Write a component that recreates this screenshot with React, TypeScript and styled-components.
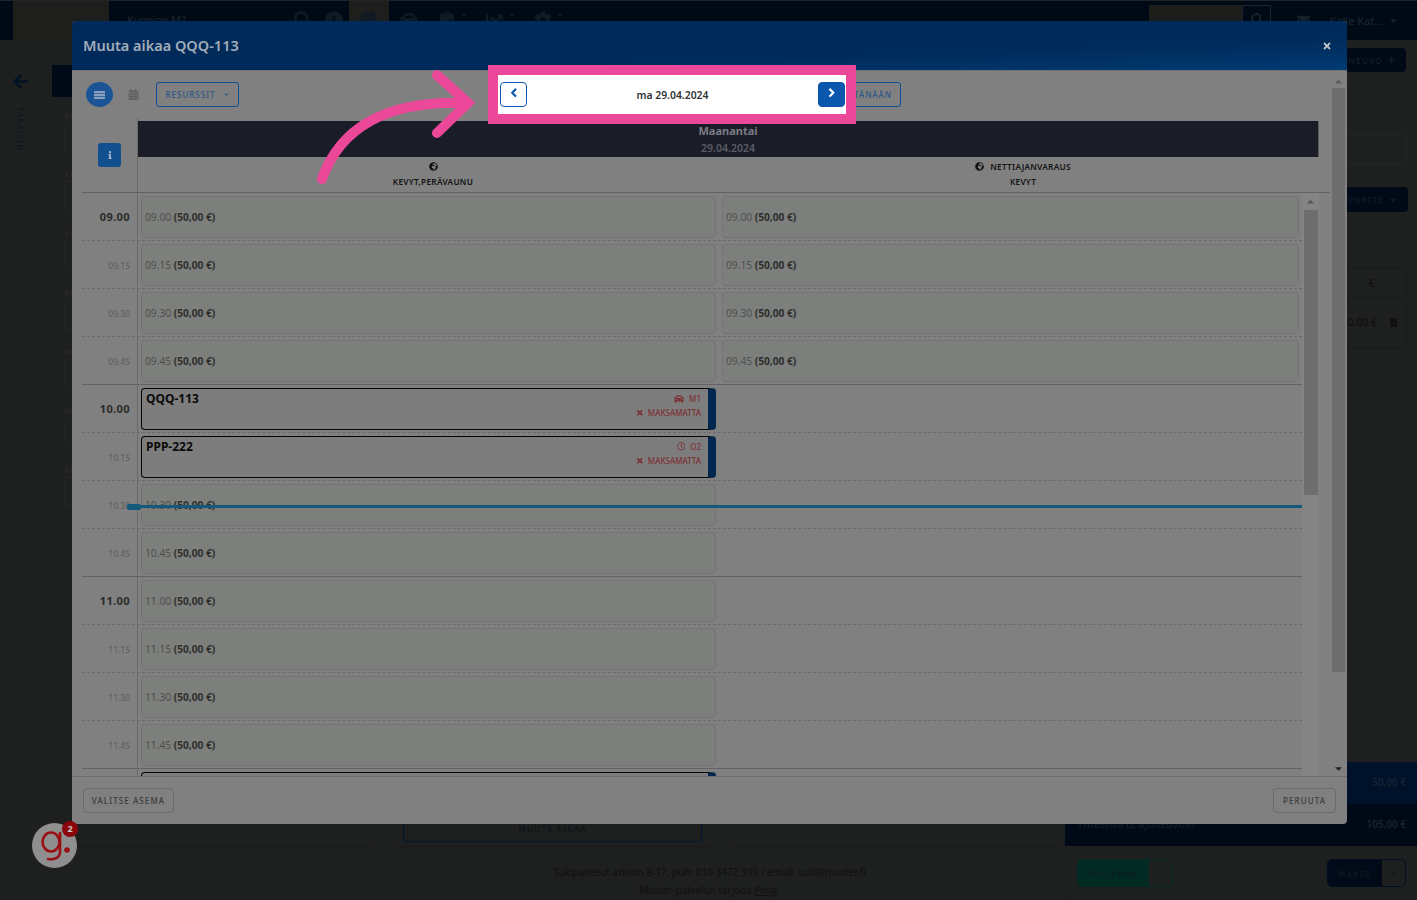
import React from "react";
import styled, { createGlobalStyle } from "styled-components";
import {
  FaArrowLeft,
  FaCalendarAlt,
  FaCar,
  FaCaretDown,
  FaCaretUp,
  FaChartLine,
  FaChevronLeft,
  FaChevronRight,
  FaClipboardCheck,
  FaCog,
  FaEnvelope,
  FaGlobeAfrica,
  FaInfo,
  FaInfoCircle,
  FaPlus,
  FaRegClock,
  FaSearch,
  FaTimes,
  FaTrashAlt,
} from "react-icons/fa";

const GlobalStyle = createGlobalStyle`
  html, body {
    margin: 0;
    padding: 0;
    background: #1e1f1f;
    font-family: "Noto Sans", "Liberation Sans", sans-serif;
  }
  * { box-sizing: border-box; }
`;

const Page = styled.div`
  position: relative;
  width: 1417px;
  height: 900px;
  overflow: hidden;
  background: #1e1f1f;
`;

/* dimmed page behind the modal */
const TopBar = styled.header`
  display: flex;
  align-items: flex-start;
  height: 40px;
  padding-left: 13px;
  background: #000a17;
  border-top: 1px solid #20242a;
  color: #14202c;
`;

const LogoBox = styled.div`
  width: 96px;
  height: 39px;
  background: #1e1e1d;
  margin-right: 18px;
`;

const StationName = styled.div`
  width: 160px;
  padding-top: 12px;
  font-size: 10.5px;
  color: #1f262d;
`;

const NavIcon = styled.div<{ $active?: boolean; $width: number }>`
  display: flex;
  align-items: flex-start;
  justify-content: center;
  gap: 4px;
  width: ${(p) => p.$width}px;
  height: 39px;
  padding-top: 10px;
  font-size: 18px;
  background: ${(p) => (p.$active ? "#1e1e1d" : "transparent")};
  color: #0f1a26;
`;

const TopRight = styled.div`
  display: flex;
  align-items: flex-start;
  margin-left: auto;
  padding-right: 19px;
  padding-top: 4px;
`;

const SearchBox = styled.div`
  display: flex;
  justify-content: flex-end;
  width: 122px;
  height: 28px;
  background: #1c1c1b;
  margin-right: 26px;
`;

const SearchButton = styled.div`
  width: 29px;
  height: 28px;
  padding: 6px 0 0 8px;
  font-size: 13px;
  background: #000a17;
  border: 1px solid #1c2630;
`;

const UserName = styled.div`
  display: flex;
  align-items: center;
  gap: 6px;
  margin-left: 19px;
  padding-top: 8px;
  font-size: 11px;
  color: #1f262d;
`;

const MailIcon = styled.div`
  padding-top: 8px;
  font-size: 13px;
`;

const Content = styled.main`
  display: grid;
  grid-template-columns: 52px 1013px 352px;
  height: 860px;
`;

const Rail = styled.aside`
  display: flex;
  flex-direction: column;
  align-items: center;
  padding-top: 33px;
  padding-right: 12px;
  color: #041226;
  font-size: 17px;
`;

const RailLabel = styled.div`
  margin-top: 17px;
  writing-mode: vertical-rl;
  font-size: 8px;
  letter-spacing: 1.2px;
  color: #0c1622;
`;

const MainColumn = styled.section`
  display: flex;
  flex-direction: column;
`;

const Tab = styled.div`
  width: 100px;
  height: 32px;
  margin-top: 25px;
  background: #000a17;
`;

const Form = styled.div`
  display: flex;
  flex-direction: column;
  gap: 15px;
  height: 740px;
  padding: 13px 0 0 12px;
`;

const FieldLabel = styled.div`
  height: 12px;
  font-size: 8px;
  font-weight: 600;
  letter-spacing: 0.5px;
  color: #2a2a2a;
`;

const FieldInput = styled.div`
  width: 200px;
  height: 30px;
  margin-bottom: 2px;
  border: 1px solid #242525;
  border-radius: 3px;
`;

const Cards = styled.div`
  display: flex;
  gap: 18px;
  height: 0;
`;

const BackCard = styled.div<{ $width: number }>`
  flex: none;
  width: ${(p) => p.$width}px;
  height: 60px;
  margin-top: -50px;
  padding: 37px 10px 0;
  border-bottom: 1px solid #191a1a;
  border-radius: 0 0 4px 4px;
`;

const OldButton = styled.div`
  height: 18px;
  border: 1px solid #00182f;
  border-top: 0;
  border-radius: 0 0 4px 4px;
  text-align: center;
  font-size: 8px;
  line-height: 10px;
  letter-spacing: 1.4px;
  color: #0c1218;
`;

const FooterText = styled.div`
  margin-top: 26px;
  padding-left: 302px;
  font-size: 10px;
  line-height: 18px;
  text-align: center;
  color: #0f1010;
  u { color: #0f1010; }
`;

const SidePanel = styled.aside`
  display: flex;
  flex-direction: column;
  align-items: flex-end;
  border-left: 1px solid #1b1c1c;
`;

const AddButton = styled.div`
  display: flex;
  align-items: center;
  justify-content: flex-end;
  gap: 4px;
  width: 200px;
  height: 24px;
  margin: 8px 11px 0 0;
  padding-right: 10px;
  background: #000a17;
  border-radius: 4px;
  font-size: 8.5px;
  font-weight: 600;
  letter-spacing: 1px;
  color: #0e1a26;
`;

const GhostField = styled.div`
  width: 200px;
  height: 30px;
  margin: 62px 10px 0 0;
  border: 1px solid #232424;
  border-radius: 3px;
`;

const ActionButton = styled(AddButton)`
  height: 25px;
  margin-top: 23px;
  margin-right: 9px;
`;

const PriceTable = styled.div`
  width: 200px;
  height: 81px;
  margin: 55px 10px 0 0;
  border: 1px solid #191a1a;
  border-radius: 3px;
  color: #0d0d0d;
  font-size: 10.5px;
`;

const PriceHead = styled.div`
  height: 30px;
  padding: 8px 31px 0 0;
  text-align: right;
  border-bottom: 1px solid #181919;
`;

const PriceRow = styled.div`
  display: flex;
  justify-content: flex-end;
  align-items: center;
  gap: 12px;
  padding: 17px 8px 0 0;
`;

const Totals = styled.div`
  display: flex;
  flex-direction: column;
  width: 352px;
  margin-top: auto;
`;

const TotalRow = styled.div<{ $dark?: boolean }>`
  display: flex;
  justify-content: flex-end;
  align-items: center;
  height: 42px;
  padding: 0 11px 2px 12px;
  background: ${(p) => (p.$dark ? "#000a17" : "#00112a")};
  font-size: 10px;
  font-weight: 600;
  color: #162330;
`;

const TotalLabel = styled.span`
  margin-right: auto;
  font-size: 10.5px;
  font-weight: 500;
  color: #0f1c2a;
`;

const PayRow = styled.div`
  display: flex;
  justify-content: space-between;
  width: 352px;
  height: 54px;
  padding: 13px 11px 0 12px;
`;

const SplitButton = styled.div<{ $width: number; $green?: boolean }>`
  display: flex;
  width: ${(p) => p.$width}px;
  height: 28px;
  border: 1px solid ${(p) => (p.$green ? "#002a22" : "#000f22")};
  border-radius: 5px;
  overflow: hidden;
  font-size: 8px;
  font-weight: 600;
  letter-spacing: 1.2px;
  color: #0e1a26;
  background: ${(p) => (p.$green ? "#002a22" : "#000a18")};
`;

const SplitLabel = styled.div`
  flex: 1;
  display: flex;
  align-items: center;
  justify-content: center;
`;

const SplitCaret = styled.div`
  display: flex;
  align-items: center;
  justify-content: center;
  width: 23px;
  font-size: 7px;
  background: #1e1f1f;
`;

/* modal */
const Modal = styled.div`
  position: absolute;
  top: 21px;
  left: 72px;
  display: flex;
  flex-direction: column;
  width: 1275px;
  height: 803px;
  border-radius: 4px;
  overflow: hidden;
  background: #808080;
`;

const ModalHeader = styled.div`
  display: flex;
  flex: none;
  align-items: center;
  justify-content: space-between;
  height: 49px;
  padding: 0 15px 2px 11px;
  background: linear-gradient(178deg, #002a59 65%, #003b74 100%);
`;

const ModalTitle = styled.div`
  font-size: 14.5px;
  font-weight: 600;
  color: #a3adba;
`;

const CloseIcon = styled.div`
  display: flex;
  padding-top: 2px;
  font-size: 10px;
  color: #c6c9cc;
`;

const ModalBody = styled.div`
  display: flex;
  flex: 1;
  min-height: 0;
  border-top: 1px solid #737373;
`;

const Calendar = styled.div`
  display: flex;
  flex-direction: column;
  width: 1258px;
  padding-left: 10px;
`;

const Toolbar = styled.div`
  display: flex;
  flex: none;
  align-items: center;
  height: 47px;
  padding: 0 0 0 4px;
`;

const RoundButton = styled.div`
  display: flex;
  align-items: center;
  justify-content: center;
  width: 27px;
  height: 25px;
  border-radius: 50%;
  background: #1a5497;
  color: #8aa0ba;
`;

const CalendarIcon = styled.div`
  display: flex;
  margin-left: 15px;
  font-size: 11px;
  color: #5f5f5f;
`;

const OutlineButton = styled.div`
  display: flex;
  align-items: center;
  justify-content: center;
  gap: 7px;
  height: 25px;
  border: 1px solid #0f4f96;
  border-radius: 3px;
  font-size: 8px;
  font-weight: 500;
  letter-spacing: 1px;
  color: #2c5687;
`;

const ResourceButton = styled(OutlineButton)`
  width: 83px;
  margin-left: 17px;
`;

const TodayButton = styled(OutlineButton)`
  width: 56px;
  margin-left: 606px;
`;

const CaretIcon = styled.span`
  display: flex;
  font-size: 7px;
`;

const HeadRow = styled.div`
  display: flex;
  flex: none;
  height: 75px;
  border-bottom: 1px solid #616161;
`;

const CornerCell = styled.div`
  display: flex;
  flex: none;
  align-items: center;
  justify-content: center;
  width: 56px;
  border-right: 1px solid #6a6a6a;
`;

const InfoButton = styled.div`
  display: flex;
  align-items: center;
  justify-content: center;
  width: 23px;
  height: 24px;
  border-radius: 3px;
  background: #124f8e;
  font-size: 8px;
  color: #a9b8c9;
`;

const HeadMain = styled.div`
  display: flex;
  flex-direction: column;
  width: 1181px;
  padding-top: 3px;
`;

const DayBand = styled.div`
  display: flex;
  flex-direction: column;
  align-items: center;
  height: 36px;
  background: #1a1c28;
  border-right: 1px solid #5c5c5c;
`;

const DayName = styled.div`
  font-size: 11px;
  line-height: 19px;
  font-weight: 700;
  color: #7a7c84;
`;

const DayDate = styled.div`
  font-size: 10.5px;
  line-height: 16px;
  font-weight: 600;
  color: #5b5d66;
`;

const ResourceRow = styled.div`
  display: grid;
  flex: 1;
  grid-template-columns: 590px 590px;
`;

const ResourceCell = styled.div`
  display: flex;
  flex-direction: column;
  align-items: center;
  padding-top: 2px;
  font-size: 8.3px;
  font-weight: 600;
  line-height: 15px;
  letter-spacing: 0.25px;
  color: #131313;
`;

const ResourceName = styled.div`
  display: flex;
  align-items: center;
  gap: 6px;
  height: 15px;
  svg { font-size: 9px; color: #111; }
`;

const GridArea = styled.div`
  position: relative;
  display: flex;
  flex: 1;
  min-height: 0;
  overflow: hidden;
`;

const Rows = styled.div`
  display: flex;
  flex-direction: column;
  width: 1220px;
`;

const Row = styled.div<{ $solid: boolean }>`
  display: flex;
  flex: none;
  height: 48px;
  border-bottom: 1px ${(p) => (p.$solid ? "solid #636363" : "dashed #6a6a6a")};
`;

const TimeCell = styled.div<{ $major: boolean }>`
  flex: none;
  width: 56px;
  padding: ${(p) => (p.$major ? "16px" : "17px")} 7px 0 0;
  text-align: right;
  border-right: 1px solid #6a6a6a;
  font-size: ${(p) => (p.$major ? "11px" : "8.5px")};
  font-weight: ${(p) => (p.$major ? 700 : 400)};
  line-height: 16px;
  letter-spacing: ${(p) => (p.$major ? "0.4px" : "0")};
  color: ${(p) => (p.$major ? "#2a2a2a" : "#5c5c5c")};
`;

const Slots = styled.div`
  display: grid;
  grid-template-columns: 575px 577px;
  column-gap: 6px;
  padding: 3px 0 0 3px;
`;

const Slot = styled.div`
  height: 42px;
  padding: 12px 0 0 3px;
  background: #7c7f7b;
  border: 1px solid #727472;
  border-radius: 4px;
  font-size: 10.2px;
  line-height: 16px;
  color: #4f4f4f;
  b { font-weight: 700; color: #2e2e2e; }
`;

const Booking = styled.div`
  display: flex;
  justify-content: space-between;
  height: 42px;
  background: #7d7d7d;
  border: 1.5px solid #060606;
  border-right: 8px solid #00284f;
  border-radius: 4px;
  padding: 2px 7px 0 4px;
`;

const Plate = styled.div`
  font-size: 12px;
  font-weight: 700;
  line-height: 16px;
  color: #0a0a0a;
`;

const BookingInfo = styled.div`
  display: flex;
  flex-direction: column;
  align-items: flex-end;
  gap: 3px;
  padding-top: 2px;
  color: #7c3236;
  font-size: 8px;
  font-weight: 500;
  line-height: 11px;
`;

const InfoLine = styled.div`
  display: flex;
  align-items: center;
  gap: 4px;
  svg { font-size: 7.5px; stroke: currentColor; stroke-width: 40; }
`;

const CarLine = styled(InfoLine)`
  gap: 5px;
  svg { font-size: 10px; stroke-width: 0; }
`;

const ClockIcon = styled(FaRegClock)`
  && { font-size: 8.5px; }
`;

const NowLine = styled.div`
  position: absolute;
  top: 312px;
  left: 55px;
  width: 1165px;
  height: 3px;
  background: #14587c;
  &::before {
    content: "";
    position: absolute;
    top: -1px;
    left: -10px;
    width: 14px;
    height: 6px;
    border-radius: 2px;
    background: #14587c;
  }
`;

const ScrollTrack = styled.div<{ $width: number }>`
  display: flex;
  flex: none;
  flex-direction: column;
  align-items: center;
  width: ${(p) => p.$width}px;
  color: #5a5a5a;
  font-size: 11px;
`;

const InnerTrack = styled(ScrollTrack)`
  padding-top: 3px;
  background: #848484;
`;

const InnerThumb = styled.div`
  width: 14px;
  height: 285px;
  margin-top: 3px;
  background: #6e6e6e;
`;

const OuterTrack = styled(ScrollTrack)`
  margin-left: 2px;
  padding-top: 5px;
`;

const OuterThumb = styled.div`
  width: 13px;
  height: 584px;
  margin-top: 1px;
  background: #6e6e6e;
`;

const OuterArrowDown = styled.div`
  display: flex;
  margin-top: auto;
  margin-bottom: 2px;
  color: #232323;
`;

const ModalFooter = styled.div`
  display: flex;
  flex: none;
  align-items: center;
  justify-content: space-between;
  height: 48px;
  padding: 0 11px 1px;
  border-top: 1px solid #6f6f6f;
`;

const FooterButton = styled.div<{ $width: number }>`
  display: flex;
  align-items: center;
  justify-content: center;
  width: ${(p) => p.$width}px;
  height: 25px;
  border: 1px solid #6a6a6a;
  border-radius: 4px;
  font-size: 8px;
  font-weight: 500;
  letter-spacing: 1.1px;
  color: #3a3a3a;
`;

/* highlight drawn over the screenshot */
const Highlight = styled.div`
  position: absolute;
  top: 65px;
  left: 488px;
  display: flex;
  align-items: center;
  justify-content: space-between;
  width: 368px;
  height: 59px;
  padding: 0 1px 1px 2px;
  background: #fff;
  border: 10px solid #ec4899;
`;

const NavButton = styled.div<{ $filled?: boolean }>`
  display: flex;
  align-items: center;
  justify-content: center;
  width: 27px;
  height: 25px;
  padding-bottom: 3px;
  font-size: 9.5px;
  border: 1px solid #0b57ad;
  border-radius: 4px;
  background: ${(p) => (p.$filled ? "#0b57ad" : "#fff")};
  color: ${(p) => (p.$filled ? "#fff" : "#0b57ad")};
  svg { stroke: currentColor; stroke-width: 50; }
`;

const DateLabel = styled.div`
  padding-top: 1px;
  font-size: 10.4px;
  font-weight: 600;
  color: #333;
`;

const ArrowSvg = styled.svg`
  position: absolute;
  top: 60px;
  left: 310px;
`;

const Guide = styled.div`
  position: absolute;
  top: 823px;
  left: 32px;
  width: 45px;
  height: 45px;
  border-radius: 50%;
  background: #8f8f8f;
`;

const GuideBadge = styled.div`
  position: absolute;
  top: -2px;
  right: -1px;
  width: 16px;
  height: 16px;
  border-radius: 50%;
  background: #8a0509;
  color: #ccc;
  font-size: 9px;
  font-weight: 700;
  line-height: 15px;
  text-align: center;
`;

type RowData = {
  time: string;
  kind: "double" | "single" | "qqq" | "ppp" | "next";
};

const rows: RowData[] = [
  { time: "09.00", kind: "double" },
  { time: "09.15", kind: "double" },
  { time: "09.30", kind: "double" },
  { time: "09.45", kind: "double" },
  { time: "10.00", kind: "qqq" },
  { time: "10.15", kind: "ppp" },
  { time: "10.30", kind: "single" },
  { time: "10.45", kind: "single" },
  { time: "11.00", kind: "single" },
  { time: "11.15", kind: "single" },
  { time: "11.30", kind: "single" },
  { time: "11.45", kind: "single" },
  { time: "12.00", kind: "next" },
];

const fields = ["Rekisterinumero", "Asiakas", "Valmistaja", "Kilometrit", "Kuljettaja", "Merkki", "Kommentti"];

const ListIcon = () => (
  <svg width="11" height="8" viewBox="0 0 11 8" fill="currentColor">
    <rect x="0" y="0" width="11" height="2.2" />
    <rect x="0" y="2.9" width="11" height="2.2" />
    <rect x="0" y="5.8" width="11" height="2.2" />
  </svg>
);

const FreeSlot = ({ time }: { time: string }) => (
  <Slot>
    {time} <b>(50,00 €)</b>
  </Slot>
);

const BookedSlot = ({ plate, place, icon }: { plate: string; place: string; icon: React.ReactNode }) => (
  <Booking>
    <Plate>{plate}</Plate>
    <BookingInfo>
      <CarLine>
        {icon} {place}
      </CarLine>
      <InfoLine>
        <FaTimes /> MAKSAMATTA
      </InfoLine>
    </BookingInfo>
  </Booking>
);

const BackgroundPage = () => (
  <>
    <TopBar>
      <LogoBox />
      <StationName>Kuopion M2</StationName>
      <NavIcon $width={32}><FaSearch /></NavIcon>
      <NavIcon $width={30}><FaInfoCircle /></NavIcon>
      <NavIcon $width={40} $active><FaCalendarAlt /></NavIcon>
      <NavIcon $width={40}><FaCar /></NavIcon>
      <NavIcon $width={48}><FaClipboardCheck /><FaCaretDown size={8} /></NavIcon>
      <NavIcon $width={48}><FaChartLine /><FaCaretDown size={8} /></NavIcon>
      <NavIcon $width={48}><FaCog /><FaCaretDown size={8} /></NavIcon>
      <TopRight>
        <SearchBox>
          <SearchButton><FaSearch /></SearchButton>
        </SearchBox>
        <MailIcon><FaEnvelope /></MailIcon>
        <UserName>Kalle Kat... <FaCaretDown size={9} /></UserName>
      </TopRight>
    </TopBar>
    <Content>
      <Rail>
        <FaArrowLeft />
        <RailLabel>TAKAISIN</RailLabel>
      </Rail>
      <MainColumn>
        <Tab />
        <Form>
          {fields.map((f) => (
            <div key={f}>
              <FieldLabel>{f}</FieldLabel>
              <FieldInput />
            </div>
          ))}
        </Form>
        <Cards>
          <BackCard $width={323} />
          <BackCard $width={319}>
            <OldButton>MUUTA AIKAA</OldButton>
          </BackCard>
          <BackCard $width={330} />
        </Cards>
        <FooterText>
          Tukipalvelut arkisin 8-17, puh: 010 3472 399 / email: tuki@muster.fi
          <br />
          Muster-palvelun tarjoaa <u>Pinja</u>.
        </FooterText>
      </MainColumn>
      <SidePanel>
        <AddButton>AJONEUVO <FaPlus size={9} /></AddButton>
        <GhostField />
        <ActionButton>SUORITE <FaCaretDown size={10} /></ActionButton>
        <PriceTable>
          <PriceHead>€</PriceHead>
          <PriceRow>0,00 € <FaTrashAlt size={9} /></PriceRow>
        </PriceTable>
        <Totals>
          <TotalRow>50,00 €</TotalRow>
          <TotalRow $dark>
            <TotalLabel>Yhteensä (2 ajoneuvoa)</TotalLabel>
            105,00 €
          </TotalRow>
          <PayRow>
            <SplitButton $width={96} $green>
              <SplitLabel>TALLENNA</SplitLabel>
              <SplitCaret><FaCaretDown /></SplitCaret>
            </SplitButton>
            <SplitButton $width={79}>
              <SplitLabel>MAKSU</SplitLabel>
              <SplitCaret><FaCaretDown /></SplitCaret>
            </SplitButton>
          </PayRow>
        </Totals>
      </SidePanel>
    </Content>
  </>
);

export default function App() {
  return (
    <Page>
      <GlobalStyle />
      <BackgroundPage />
      <Modal>
        <ModalHeader>
          <ModalTitle>Muuta aikaa QQQ-113</ModalTitle>
          <CloseIcon><FaTimes /></CloseIcon>
        </ModalHeader>
        <ModalBody>
          <Calendar>
            <Toolbar>
              <RoundButton><ListIcon /></RoundButton>
              <CalendarIcon><FaCalendarAlt /></CalendarIcon>
              <ResourceButton>RESURSSIT <CaretIcon><FaCaretDown /></CaretIcon></ResourceButton>
              <TodayButton>TÄNÄÄN</TodayButton>
            </Toolbar>
            <HeadRow>
              <CornerCell>
                <InfoButton><FaInfo /></InfoButton>
              </CornerCell>
              <HeadMain>
                <DayBand>
                  <DayName>Maanantai</DayName>
                  <DayDate>29.04.2024</DayDate>
                </DayBand>
                <ResourceRow>
                  <ResourceCell>
                    <ResourceName><FaGlobeAfrica /></ResourceName>
                    KEVYT,PERÄVAUNU
                  </ResourceCell>
                  <ResourceCell>
                    <ResourceName><FaGlobeAfrica /> NETTIAJANVARAUS</ResourceName>
                    KEVYT
                  </ResourceCell>
                </ResourceRow>
              </HeadMain>
            </HeadRow>
            <GridArea>
              <Rows>
                {rows.map((r, i) => {
                  const major = r.time.endsWith(".00");
                  const next = rows[i + 1];
                  const solid = !!next && next.time.endsWith(".00");
                  return (
                    <Row key={r.time} $solid={solid}>
                      {/* last row is scrolled almost out of view, only its frame shows */}
                      <TimeCell $major={major}>{r.kind === "next" ? "" : r.time}</TimeCell>
                      <Slots>
                        {r.kind === "double" && (
                          <>
                            <FreeSlot time={r.time} />
                            <FreeSlot time={r.time} />
                          </>
                        )}
                        {r.kind === "single" && <FreeSlot time={r.time} />}
                        {r.kind === "qqq" && <BookedSlot plate="QQQ-113" place="M1" icon={<FaCar />} />}
                        {r.kind === "ppp" && <BookedSlot plate="PPP-222" place="O2" icon={<ClockIcon />} />}
                        {r.kind === "next" && <Booking />}
                      </Slots>
                    </Row>
                  );
                })}
              </Rows>
              <NowLine />
              <InnerTrack $width={17}>
                <FaCaretUp />
                <InnerThumb />
              </InnerTrack>
            </GridArea>
          </Calendar>
          <OuterTrack $width={13}>
            <FaCaretUp />
            <OuterThumb />
            <OuterArrowDown><FaCaretDown /></OuterArrowDown>
          </OuterTrack>
        </ModalBody>
        <ModalFooter>
          <FooterButton $width={91}>VALITSE ASEMA</FooterButton>
          <FooterButton $width={63}>PERUUTA</FooterButton>
        </ModalFooter>
      </Modal>
      <Highlight>
        <NavButton><FaChevronLeft /></NavButton>
        <DateLabel>ma 29.04.2024</DateLabel>
        <NavButton $filled><FaChevronRight /></NavButton>
      </Highlight>
      <ArrowSvg width="170" height="130" viewBox="310 60 170 130" fill="none">
        <path
          d="M322 179 C340 128 385 100 468 103 M437 75 L468 103 L437 133"
          stroke="#ec4899"
          strokeWidth="10"
          strokeLinecap="round"
          strokeLinejoin="miter"
        />
      </ArrowSvg>
      <Guide>
        <svg width="45" height="45" viewBox="0 0 45 45" fill="none">
          <ellipse cx="19" cy="19" rx="8.5" ry="9.5" stroke="#9a0f14" strokeWidth="2.6" />
          <path d="M28 10 V29 C28 35 22 37 16 36" stroke="#9a0f14" strokeWidth="2.6" strokeLinecap="round" />
          <circle cx="35" cy="27" r="2.8" fill="#9a0f14" />
        </svg>
        <GuideBadge>2</GuideBadge>
      </Guide>
    </Page>
  );
}
